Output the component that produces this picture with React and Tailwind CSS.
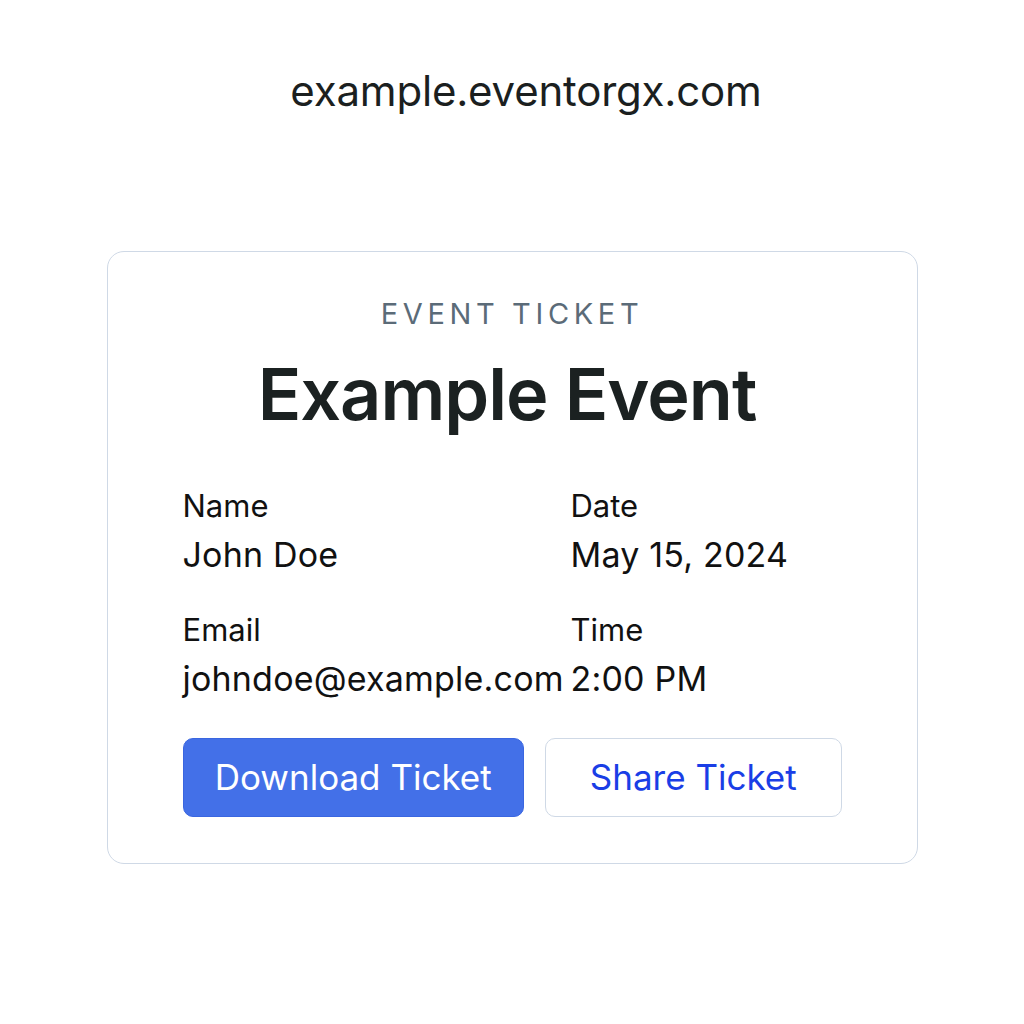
import React from 'react';

const fields = [
  { label: 'Name', value: 'John Doe' },
  { label: 'Date', value: 'May 15, 2024' },
  { label: 'Email', value: 'johndoe@example.com' },
  { label: 'Time', value: '2:00 PM' },
];

export default function App() {
  return (
    <div className="w-[1024px] h-[1024px] bg-white flex flex-col items-center font-['Inter',sans-serif]">
      <div className="mt-[66px] pl-[28px] text-[42px] leading-[50px] text-[#1b1f1f] tracking-[-0.2px]">
        example.eventorgx.com
      </div>

      <div className="mt-[135px] w-[811px] h-[613px] border border-[#cfd9e6] rounded-[17px] px-[75px] pt-[42px] flex flex-col">
        <div className="text-center text-[29px] leading-[40px] tracking-[0.16em] text-[#5b6b78]">
          EVENT TICKET
        </div>
        <h1 className="mt-[20px] pr-[10px] text-center text-[72px] leading-[80px] font-semibold text-[#1b2121] tracking-[-1px]">
          Example Event
        </h1>

        <div className="mt-[52px] grid grid-cols-[388px_1fr] gap-y-[35px] text-[#111]">
          {fields.map((f) => (
            <div key={f.label}>
              <div className="text-[31px] leading-[40px]">{f.label}</div>
              <div className="mt-[9px] text-[34px] leading-[40px] tracking-[0.2px] whitespace-nowrap">{f.value}</div>
            </div>
          ))}
        </div>

        <div className="mt-[39px] flex gap-[21px]">
          <button className="w-[342px] h-[79px] rounded-[10px] bg-[#4370e8] border border-[#3a66e0] text-white text-[35px]">
            Download Ticket
          </button>
          <button className="w-[297px] h-[79px] rounded-[10px] bg-white border border-[#cfd9e6] text-[#1a3ee6] text-[35px]">
            Share Ticket
          </button>
        </div>
      </div>
    </div>
  );
}
